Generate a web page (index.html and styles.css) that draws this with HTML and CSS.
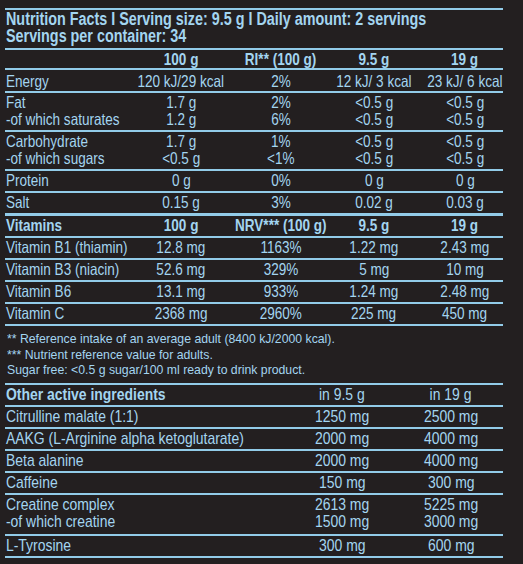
FILE: index.html
```html
<!DOCTYPE html>
<html lang="en">
<head>
  <meta charset="UTF-8">
  <meta name="viewport" content="width=device-width, initial-scale=1.0">
  <title>Nutrition Facts</title>
  <link rel="stylesheet" href="styles.css">
</head>
<body>
  <div class="panel">
    <div class="title">
      <span>Nutrition Facts I Serving size: 9.5 g I Daily amount: 2 servings<br>
      Servings per container: 34</span>
    </div>

    <div class="row head first">
      <span></span><span>100 g</span><span>RI** (100 g)</span><span>9.5 g</span><span>19 g</span>
    </div>
    <div class="row energy">
      <span>Energy</span><span>120 kJ/29 kcal</span><span>2%</span><span>12 kJ/ 3 kcal</span><span>23 kJ/ 6 kcal</span>
    </div>
    <div class="row">
      <span>Fat<br>-of which saturates</span><span>1.7 g<br>1.2 g</span><span>2%<br>6%</span><span>&lt;0.5 g<br>&lt;0.5 g</span><span>&lt;0.5 g<br>&lt;0.5 g</span>
    </div>
    <div class="row">
      <span>Carbohydrate<br>-of which sugars</span><span>1.7 g<br>&lt;0.5 g</span><span>1%<br>&lt;1%</span><span>&lt;0.5 g<br>&lt;0.5 g</span><span>&lt;0.5 g<br>&lt;0.5 g</span>
    </div>
    <div class="row">
      <span>Protein</span><span>0 g</span><span>0%</span><span>0 g</span><span>0 g</span>
    </div>
    <div class="row thick">
      <span>Salt</span><span>0.15 g</span><span>3%</span><span>0.02 g</span><span>0.03 g</span>
    </div>

    <div class="row head">
      <span>Vitamins</span><span>100 g</span><span>NRV*** (100 g)</span><span>9.5 g</span><span>19 g</span>
    </div>
    <div class="row">
      <span>Vitamin B1 (thiamin)</span><span>12.8 mg</span><span>1163%</span><span>1.22 mg</span><span>2.43 mg</span>
    </div>
    <div class="row">
      <span>Vitamin B3 (niacin)</span><span>52.6 mg</span><span>329%</span><span>5 mg</span><span>10 mg</span>
    </div>
    <div class="row">
      <span>Vitamin B6</span><span>13.1 mg</span><span>933%</span><span>1.24 mg</span><span>2.48 mg</span>
    </div>
    <div class="row">
      <span>Vitamin C</span><span>2368 mg</span><span>2960%</span><span>225 mg</span><span>450 mg</span>
    </div>

    <div class="notes">
      <p>
        ** Reference intake of an average adult (8400 kJ/2000 kcal).<br>
        *** Nutrient reference value for adults.<br>
        Sugar free: &lt;0.5 g sugar/100 ml ready to drink product.
      </p>
    </div>

    <div class="row other head">
      <span>Other active ingredients</span><span class="plain">in 9.5 g</span><span class="plain">in 19 g</span>
    </div>
    <div class="row other">
      <span>Citrulline malate (1:1)</span><span>1250 mg</span><span>2500 mg</span>
    </div>
    <div class="row other">
      <span>AAKG (L-Arginine alpha ketoglutarate)</span><span>2000 mg</span><span>4000 mg</span>
    </div>
    <div class="row other">
      <span>Beta alanine</span><span>2000 mg</span><span>4000 mg</span>
    </div>
    <div class="row other">
      <span>Caffeine</span><span>150 mg</span><span>300 mg</span>
    </div>
    <div class="row other double">
      <span>Creatine complex<br>-of which creatine</span><span>2613 mg<br>1500 mg</span><span>5225 mg<br>3000 mg</span>
    </div>
    <div class="row other">
      <span>L-Tyrosine</span><span>300 mg</span><span>600 mg</span>
    </div>
  </div>
</body>
</html>
```

FILE: styles.css
```css
/* the label uses a narrow sans; Arial squeezed to 82% gives the same widths */
body {
  margin: 0;
  overflow: hidden;
  background-color: #231f20;
  color: #a3d5f0;
  font-family: "Liberation Sans", Arial, sans-serif;
}
.panel {
  width: 498px;
  margin-left: 5px;
  padding-top: 8px;
}
.title {
  border-top: 2px solid #92cbe8;
  border-bottom: 2px solid #92cbe8;
  padding: 1px 0 3px 1px;
  font-size: 17.5px;
  font-weight: bold;
  line-height: 17px;
  white-space: nowrap;
}
.title span {
  display: inline-block;
  transform: scaleX(0.82);
  transform-origin: left center;
}
.row {
  display: grid;
  grid-template-columns: 116px 120px 80px 106px 76px;
  padding: 1px 0 2px;
  border-bottom: 2px solid #92cbe8;
  font-size: 16.5px;
  line-height: 17px;
  white-space: nowrap;
}
.row span {
  justify-self: center;
  text-align: center;
  transform: scaleX(0.82);
}
.row span:first-child {
  justify-self: start;
  text-align: left;
  padding-left: 1.2px;
  transform-origin: left center;
}
.row.head {
  font-weight: bold;
}
.row.first {
  padding-bottom: 0;
}
.row.energy {
  padding: 3px 0 1px;
}
.row.thick {
  border-bottom-width: 3px;
}
.notes {
  padding: 5px 0 5.5px 2px;
  border-bottom: 2px solid #92cbe8;
  font-size: 13px;
  line-height: 15.5px;
}
/* footnotes are set a little wider than the table text */
.notes p {
  display: inline-block;
  margin: 0;
  white-space: nowrap;
  transform: scaleX(0.943);
  transform-origin: left top;
}
.row.other {
  grid-template-columns: 280px 114px 104px;
  font-size: 17px;
}
.row.other.double {
  padding-bottom: 3.5px;
}
.row .plain {
  font-weight: normal;
}
```
